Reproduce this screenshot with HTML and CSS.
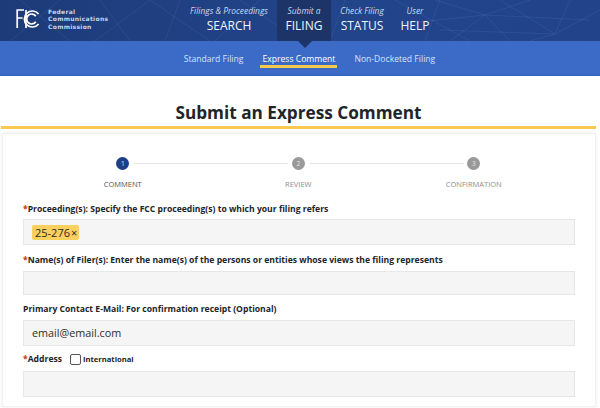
FILE: index.html
```html
<!DOCTYPE html>
<html lang="en">
<head>
<meta charset="utf-8">
<title>Submit an Express Comment</title>
<link rel="stylesheet" href="styles.css">
</head>
<body>
<header class="top">
  <svg class="mesh" viewBox="0 0 600 41" width="600" height="41" aria-hidden="true">
    <path d="M20 0L70 41M60 0L10 41M100 0L130 41M150 0L95 41M150 0L210 41M180 0L165 41M260 0L215 41M240 0L300 41M345 0L330 41M395 0L470 41M440 0L425 41M485 15L435 0M485 15L530 0M485 15L450 41M485 15L510 41M485 15L400 24M485 15L590 20M555 34L500 0M555 34L570 0M555 34L530 41M555 34L600 10M555 34L440 30" />
  </svg>
  <a class="logo" href="#">
    <svg class="logo-mark" viewBox="0 0 26 22" width="26" height="22" aria-hidden="true">
      <path d="M9 2H2.2V20M2.2 10H7.5M11 2V20" />
      <path d="M23.6 6A8 8 0 1 0 23.6 16M20.8 8.2A5 5 0 1 0 20.8 13.8" />
    </svg>
    <span class="logo-text">Federal<br>Communications<br>Commission</span>
  </a>
  <nav class="main-nav">
    <a class="nav-item nav-search" href="#"><i>Filings &amp; Proceedings</i><b>SEARCH</b></a>
    <a class="nav-item nav-active" href="#"><i>Submit a</i><b>FILING</b></a>
    <a class="nav-item" href="#"><i>Check Filing</i><b>STATUS</b></a>
    <a class="nav-item" href="#"><i>User</i><b>HELP</b></a>
  </nav>
</header>
<nav class="sub-nav">
  <span class="notch"></span>
  <a href="#">Standard Filing</a>
  <a class="current" href="#">Express Comment</a>
  <a href="#">Non-Docketed Filing</a>
</nav>
<main>
  <h1>Submit an Express Comment</h1>
  <section class="card">
    <ol class="steps">
      <li class="step step-on"><span class="dot">1</span><span class="step-name">COMMENT</span></li>
      <li class="step"><span class="dot">2</span><span class="step-name">REVIEW</span></li>
      <li class="step step-last"><span class="dot">3</span><span class="step-name">CONFIRMATION</span></li>
    </ol>
    <form class="form">
      <label class="label"><em>*</em>Proceeding(s): Specify the FCC proceeding(s) to which your filing refers</label>
      <div class="field field-tags"><span class="tag">25-276<span class="tag-x">×</span></span></div>
      <label class="label label-names"><em>*</em>Name(s) of Filer(s): Enter the name(s) of the persons or entities whose views the filing represents</label>
      <div class="field field-names"></div>
      <label class="label label-mail">Primary Contact E-Mail: For confirmation receipt (Optional)</label>
      <div class="field field-mail">email@email.com</div>
      <div class="label label-address"><span class="addr"><em>*</em>Address</span><span class="check"></span><span class="intl">International</span></div>
      <div class="field field-addr"></div>
    </form>
  </section>
</main>
</body>
</html>
```
FILE: styles.css
```css
* { box-sizing: border-box; }
html, body { margin: 0; height: 408px; overflow: hidden; }
body { width: 600px; background: #fff; font-family: "Open Sans", sans-serif; color: #212529; }
a { text-decoration: none; color: inherit; }

.top {
  position: relative;
  height: 41px;
  display: flex;
  background: linear-gradient(90deg, #1d3b78 0%, #22448a 55%, #22438a 100%);
  overflow: hidden;
}
.mesh { position: absolute; left: 0; top: 0; fill: none; stroke: rgba(150, 180, 235, .16); stroke-width: .7; }
.logo { position: relative; display: flex; align-items: center; margin-left: 15px; height: 38px; color: #e8edf6; }
.logo-mark { fill: none; stroke: #fff; stroke-width: 1.7; }
.logo-text {
  margin-left: 7px;
  font: bold 6px/7.6px "DejaVu Sans", sans-serif;
  letter-spacing: .3px;
  color: #c9d4e9;
}
.main-nav { position: absolute; left: 0; top: 0; width: 100%; height: 41px; }
.nav-item {
  position: absolute;
  top: 0;
  height: 41px;
  display: flex;
  flex-direction: column;
  align-items: center;
  color: #e6ecf7;
}
.nav-item i { font-size: 8.4px; line-height: 11px; margin-top: 5px; color: #ccd7ec; white-space: nowrap; }
.nav-item b { font-weight: 400; font-size: 12px; line-height: 18px; margin-top: 1px; color: #f0f4fb; }
.nav-item:nth-child(1) { left: 189px; width: 80px; }
.nav-item:nth-child(2) { left: 277px; width: 54px; background: #1c3468; }
.nav-item:nth-child(3) { left: 338px; width: 48px; }
.nav-item:nth-child(4) { left: 399px; width: 32px; }

.sub-nav {
  position: relative;
  height: 35px;
  display: flex;
  justify-content: center;
  gap: 15px;
  padding: 9px 0 0 19px;
  background: #3b6bc6;
  border-bottom: 1px solid #3261bc;
  font-size: 8.6px;
  line-height: 14px;
  color: #d6e2f6;
}
.sub-nav a { height: 18px; padding: 2px 2px 0; white-space: nowrap; }
.sub-nav .current { color: #fff; border-bottom: 3px solid #f7c850; height: 18px; }
.notch {
  position: absolute;
  left: 298px;
  top: 0;
  width: 0;
  height: 0;
  border: 7px solid transparent;
  border-top: 7px solid #1c3468;
  border-bottom: 0;
}

main { padding: 0 4px 0 1px; }
h1 {
  margin: 0;
  padding: 26px 0 0;
  height: 53px;
  border-bottom: 3px solid #f9c84f;
  text-align: center;
  font-size: 17.2px;
  line-height: 22px;
  font-weight: 700;
  color: #212529;
}
.card {
  margin: 4px 0 0 1px;
  height: 274px;
  border: 1px solid #f1f1f1;
  box-shadow: 0 0 3px rgba(0, 0, 0, .08);
}
.steps {
  list-style: none;
  display: grid;
  grid-template-columns: repeat(3, 175.5px);
  margin: 23px 0 0 32px;
  padding: 0;
}
.step {
  position: relative;
  display: flex;
  flex-direction: column;
  align-items: center;
  color: #8e8e8e;
}
.step::after {
  content: "";
  position: absolute;
  left: 99px;
  top: 6px;
  width: 154px;
  height: 1px;
  background: #e2e2e2;
}
.step-last::after { display: none; }
.dot {
  width: 13px;
  height: 13px;
  border-radius: 50%;
  background: #999;
  color: #e8e8e8;
  font-size: 6.5px;
  line-height: 13px;
  text-align: center;
}
.step-on .dot { background: #1d3f85; color: #dfe6f4; }
.step-name { margin-top: 8px; font-size: 7.5px; line-height: 12px; }
.step-on .step-name { color: #555; }

.form { margin: 13px 20px 0 20px; }
.label { display: block; font-size: 8.6px; line-height: 13px; font-weight: 700; color: #212529; white-space: nowrap; }
.label em { font-style: normal; color: #c9302c; }
.field { height: 26px; margin-top: 3px; background: #f5f5f5; border: 1px solid #e7e7e7; }
.field-tags { display: flex; align-items: center; padding-left: 8px; }
.tag {
  display: flex;
  align-items: center;
  height: 15px;
  padding: 0 2px 0 3px;
  border-radius: 2px;
  background: #fbd05f;
  font-size: 11px;
  color: #2b2b20;
}
.tag-x { margin-left: 1px; font-size: 11px; }
.label-names { margin-top: 9px; }
.field-names { height: 24px; margin-top: 4px; }
.label-mail { margin-top: 8px; }
.field-mail { height: 26px; margin-top: 4px; padding-left: 8px; font-size: 10.8px; line-height: 24px; color: #2e2e2e; }
.label-address { display: flex; align-items: center; height: 20px; margin-top: 3px; }
.addr { font-size: 8.6px; }
.check { width: 11px; height: 11px; margin-left: 8px; border: 1px solid #555; border-radius: 2px; background: #fff; }
.intl { margin-left: 2px; font-size: 7.6px; }
.field-addr { margin-top: 2px; }
```
